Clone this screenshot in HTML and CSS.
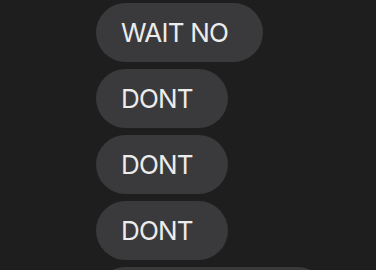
FILE: index.html
```html
<!DOCTYPE html>
<html>
<head>
<meta charset="utf-8">
<link rel="stylesheet" href="styles.css">
</head>
<body>
<div class="thread">
  <div class="bubble">WAIT NO</div>
  <div class="bubble">DONT</div>
  <div class="bubble">DONT</div>
  <div class="bubble">DONT</div>
  <div class="bubble">PLEASE DONT</div>
</div>
</body>
</html>
```
FILE: styles.css
```css
html, body {
  margin: 0;
  padding: 0;
  background: #1e1e1e;
  overflow: hidden;
}
.thread {
  display: flex;
  flex-direction: column;
  align-items: flex-start;
  gap: 7px;
  padding: 3px 0 0 96px;
}
.bubble {
  box-sizing: border-box;
  height: 59px;
  display: flex;
  align-items: center;
  padding: 0 35px 0 25px;
  border-radius: 30px;
  background: #3a3a3c;
  color: #ececec;
  font-family: Inter, "Liberation Sans", sans-serif;
  font-size: 26px;
  letter-spacing: -0.8px;
  white-space: nowrap;
}
```
